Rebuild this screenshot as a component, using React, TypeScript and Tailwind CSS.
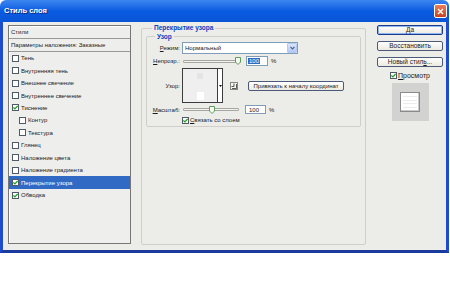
import React from "react";

const items = [
  { label: "Тень" },
  { label: "Внутренняя тень" },
  { label: "Внешнее свечение" },
  { label: "Внутреннее свечение" },
  { label: "Тиснение", checked: true },
  { label: "Контур", sub: true },
  { label: "Текстура", sub: true },
  { label: "Глянец" },
  { label: "Наложение цвета" },
  { label: "Наложение градиента" },
  { label: "Перекрытие узора", checked: true, active: true },
  { label: "Обводка", checked: true },
];

function Check({ checked }: { checked?: boolean }) {
  return (
    <span className="flex h-[7px] w-[7px] shrink-0 items-center justify-center border border-[#4f5a66] bg-white">
      {checked && (
        <svg width="5" height="5" viewBox="0 0 5 5">
          <path d="M0.4 2.4 L1.9 3.9 L4.6 0.9" fill="none" stroke="#21a121" strokeWidth="1.3" />
        </svg>
      )}
    </span>
  );
}

function Thumb() {
  return (
    <svg width="6" height="8" viewBox="0 0 6 8">
      <path d="M0.5 0.5 H5.5 V5 L3 7.5 L0.5 5 Z" fill="#f7f7f2" stroke="#5c9c5c" strokeWidth="1" />
    </svg>
  );
}

function XpButton({ children, strong }: { children: React.ReactNode; strong?: boolean }) {
  return (
    <div
      className={`flex h-[10px] w-[66px] items-center justify-center rounded-[2px] border bg-gradient-to-b from-white to-[#ece9e0] text-[6.5px] leading-none text-[#222] ${
        strong ? "border-[#1b3c8e] shadow-[inset_0_0_0_1px_#8fb4f0]" : "border-[#4a5a78]"
      }`}
    >
      {children}
    </div>
  );
}

export default function App() {
  return (
    <div className="h-[290px] w-[450px] bg-white font-['Liberation_Sans',Arial,sans-serif] text-[6px] leading-none text-[#1a1a1a]">
      <div className="flex h-[253px] w-[449px] flex-col">
        {/* title bar */}
        <div className="flex h-[22px] items-center justify-between rounded-t-[6px] bg-gradient-to-b from-[#3b86f0] via-[#0a5be2] to-[#0b55d6] pl-[4px] pr-[2px]">
          <span className="text-[7.5px] font-bold text-white [text-shadow:1px_1px_0_#0a2a80]">Стиль слоя</span>
          <div className="flex h-[14px] w-[13px] items-center justify-center rounded-[2px] border border-white bg-gradient-to-b from-[#e8805a] to-[#c9401c]">
            <svg width="7" height="7" viewBox="0 0 7 7">
              <path d="M1 1 L6 6 M6 1 L1 6" stroke="white" strokeWidth="1.4" />
            </svg>
          </div>
        </div>

        {/* body */}
        <div className="flex flex-1 border-x-[3px] border-b-[3px] border-x-[#1f4ccc] border-b-[#1a3a9e] bg-[#ecece9] pl-[5px] pt-[3px]">
          {/* left styles list */}
          <div className="flex h-[219px] w-[123px] flex-col border border-[#777] bg-[#eeeeec] shadow-[inset_1px_1px_0_#fff]">
            <div className="flex h-[13px] items-center border-b border-[#999] pl-[2px]">Стили</div>
            <div className="flex h-[13px] items-center border-b border-[#999] pl-[2px]">Параметры наложения: Заказные</div>
            {items.map((it) => (
              <div
                key={it.label}
                className={`flex h-[12.45px] items-center gap-[1px] ${it.sub ? "pl-[10px]" : "pl-[3px]"} ${
                  it.active ? "bg-[#316ac5] text-white" : ""
                }`}
              >
                <Check checked={it.checked} />
                <span className="pl-[1px]">{it.label}</span>
              </div>
            ))}
          </div>

          {/* middle group */}
          <fieldset className="ml-[10px] h-[220px] w-[225px] rounded-[2px] border border-[#cfcfc8] px-[4px] pb-[4px]">
            <legend className="ml-[6px] px-[2px] text-[6.5px] font-bold text-[#0a3fc0]">Перекрытие узора</legend>
            <fieldset className="mt-[2px] w-[215px] rounded-[2px] border border-[#cfcfc8] pb-[2px]">
              <legend className="ml-[8px] px-[2px] text-[6.5px] font-bold text-[#0a3fc0]">Узор</legend>
              <div className="flex flex-col gap-[2px] pt-[2px]">
                {/* mode */}
                <div className="flex h-[12px] items-center gap-[2px]">
                  <span className="w-[33px] text-right">
                    <u>Р</u>ежим:
                  </span>
                  <div className="flex h-[12px] w-[116px] items-center justify-between border border-[#7f9db9] bg-white pl-[2px]">
                    <span>Нормальный</span>
                    <div className="flex h-[10px] w-[10px] items-center justify-center rounded-[1px] border border-[#b5c8ef] bg-gradient-to-b from-[#dbe6fc] to-[#b1c8f5]">
                      <svg width="5" height="4" viewBox="0 0 5 4">
                        <path d="M0.5 0.8 L2.5 2.8 L4.5 0.8" fill="none" stroke="#4d6185" strokeWidth="1.2" />
                      </svg>
                    </div>
                  </div>
                </div>

                {/* opacity */}
                <div className="flex h-[10px] items-center gap-[2px]">
                  <span className="w-[33px] text-right">
                    <u>Н</u>епрозр.:
                  </span>
                  <div className="relative ml-[1px] flex h-[10px] w-[58px] items-center">
                    <div className="h-[3px] w-full rounded-[1px] border border-[#a7a7a0] bg-[#f2f2ee]" />
                    <div className="absolute right-0 top-[1px]">
                      <Thumb />
                    </div>
                  </div>
                  <div className="ml-[3px] flex h-[10px] w-[22px] items-center border border-[#7f9db9] bg-white pl-[1px]">
                    <span className="bg-[#316ac5] px-[1px] text-white">100</span>
                  </div>
                  <span className="pl-[1px]">%</span>
                </div>

                {/* pattern */}
                <div className="flex h-[35px] items-center gap-[2px]">
                  <span className="w-[33px] text-right">Узор:</span>
                  <div className="flex h-[35px] w-[41px] border border-[#3c3c3c] bg-[#efefef]">
                    <div className="flex flex-1 flex-col items-center justify-between pb-[2px] pt-[4px]">
                      <div className="h-[6px] w-[6px] bg-[#e4e4e4]" />
                      <div className="h-[8px] w-[7px] bg-white" />
                    </div>
                    <div className="flex w-[5px] items-center justify-center border-l border-[#3c3c3c] bg-white">
                      <svg width="3" height="2" viewBox="0 0 3 2">
                        <path d="M0 0 H3 L1.5 2 Z" fill="#111" />
                      </svg>
                    </div>
                  </div>
                  <div className="ml-[5px] flex h-[8px] w-[8px] items-center justify-center border border-[#888] bg-[#f4f4f0]">
                    <svg width="6" height="6" viewBox="0 0 6 6">
                      <path d="M1 5.5 H5.5 V1 M3 0.5 V3.5 H0.5" fill="none" stroke="#333" strokeWidth="0.8" />
                    </svg>
                  </div>
                  <div className="ml-[8px] flex h-[10px] w-[96px] items-center justify-center rounded-[2px] border border-[#4a5a78] bg-gradient-to-b from-white to-[#ece9e0]">
                    Привязать к началу координат
                  </div>
                </div>

                {/* scale */}
                <div className="flex h-[9px] items-center gap-[2px]">
                  <span className="w-[33px] text-right">
                    <u>М</u>асштаб:
                  </span>
                  <div className="relative ml-[1px] flex h-[9px] w-[56px] items-center">
                    <div className="h-[3px] w-full rounded-[1px] border border-[#a7a7a0] bg-[#f2f2ee]" />
                    <div className="absolute left-[26px] top-[1px]">
                      <Thumb />
                    </div>
                  </div>
                  <div className="ml-[4px] flex h-[9px] w-[21px] items-center border border-[#7f9db9] bg-white pl-[3px]">
                    100
                  </div>
                  <span className="pl-[1px]">%</span>
                </div>

                {/* link */}
                <div className="flex h-[8px] items-center gap-[1px] pl-[35px]">
                  <Check checked />
                  <span>
                    <u>С</u>вязать со слоем
                  </span>
                </div>
              </div>
            </fieldset>
          </fieldset>

          {/* right column */}
          <div className="ml-[11px] flex w-[66px] flex-col items-center gap-[6px]">
            <XpButton strong>Да</XpButton>
            <XpButton>Восстановить</XpButton>
            <XpButton>
              <span>
                Новый стил<u>ь</u>...
              </span>
            </XpButton>
            <div className="mt-[-1px] flex items-center gap-[1px]">
              <Check checked />
              <span className="text-[7px]">
                <u>П</u>росмотр
              </span>
            </div>
            <div className="mt-[-2px] flex h-[38px] w-[37px] items-center justify-center bg-[#d2d2d0]">
              <div className="flex h-[20px] w-[20px] flex-col justify-between border border-[#8a8a8a] bg-white px-[2px] py-[3px] shadow-[inset_-1px_-1px_0_#c8c8c8]">
                <div className="h-px bg-[#ececec]" />
                <div className="h-px bg-[#ececec]" />
                <div className="h-px bg-[#ececec]" />
                <div className="h-px bg-[#ececec]" />
              </div>
            </div>
          </div>
        </div>
      </div>
    </div>
  );
}
